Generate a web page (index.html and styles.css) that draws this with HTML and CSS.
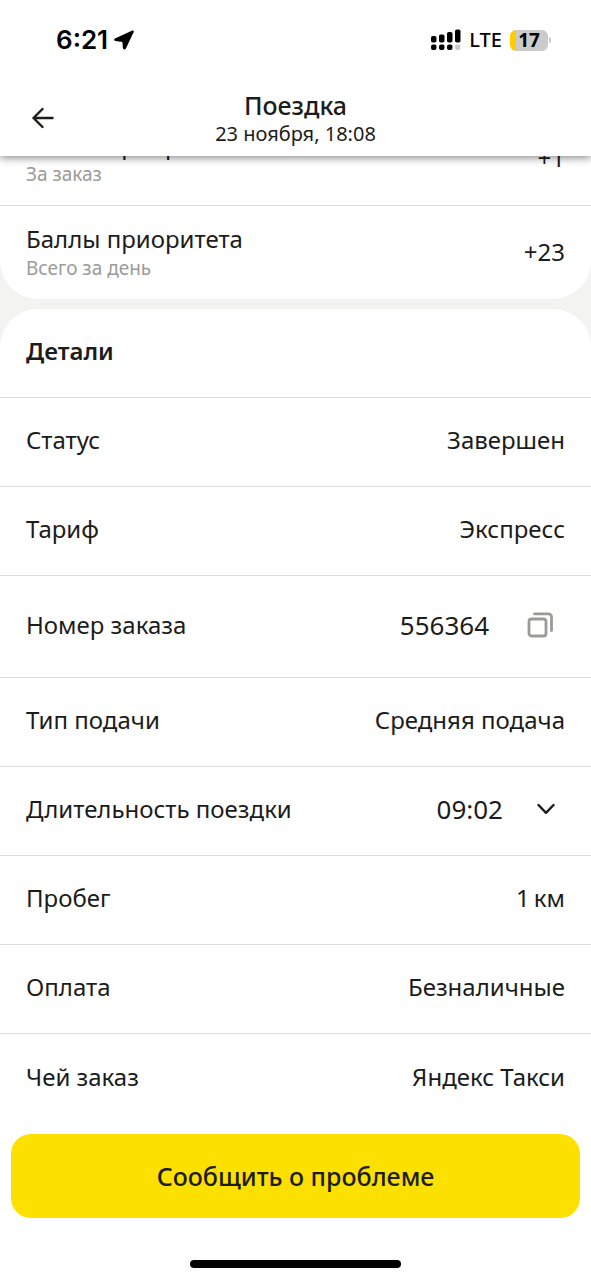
FILE: index.html
```html
<!DOCTYPE html>
<html lang="ru">
<head>
<meta charset="utf-8">
<meta name="viewport" content="width=device-width, initial-scale=1">
<title>Поездка</title>
<link rel="stylesheet" href="styles.css">
</head>
<body>
<div class="screen">
  <header class="top">
    <div class="status">
      <div class="status-left">
        <time class="clock">6:21</time>
        <svg class="location" viewBox="0 0 20 20" aria-hidden="true"><path d="M18.300.500 1 8.500C-.1 9-.1 10.600 1.200 10.900L8.400 11.900 8.900 18C9 19.600 11.200 19.900 11.900 18.500L19.700 2C20.200.900 19.400.100 18.300.500Z"/></svg>
      </div>
      <div class="status-right">
        <svg class="signal" viewBox="0 0 30 22" aria-hidden="true">
          <rect x="0" y="7" width="5.500" height="6.500" rx="1.800"/><rect x="8" y="5.500" width="5.500" height="8" rx="1.800"/><rect x="16" y="3" width="5.500" height="10.500" rx="1.800"/><rect x="24" y="0.500" width="5.500" height="13" rx="1.800"/>
          <rect x="0" y="15.500" width="5.500" height="5.500" rx="2"/><rect x="8" y="15.500" width="5.500" height="5.500" rx="2"/><rect x="16" y="15.500" width="5.500" height="5.500" rx="2"/><rect class="signal-off" x="24" y="15.500" width="5.500" height="5.500" rx="2"/>
        </svg>
        <span class="network">LTE</span>
        <span class="battery"><span class="battery-body">17</span><span class="battery-cap"></span></span>
      </div>
    </div>
    <div class="nav">
      <button class="icon-button" type="button" aria-label="Назад">
        <svg class="back" viewBox="0 0 22 22" aria-hidden="true"><path d="M20.500 11H1.500M10.500 2 1.500 11 10.500 20"/></svg>
      </button>
      <div class="heading">
        <h1 class="title">Поездка</h1>
        <p class="date">23 ноября, 18:08</p>
      </div>
    </div>
  </header>

  <main class="content">
    <dl class="card card-scrolled">
      <div class="row row-double">
        <dt>Баллы приоритета<small class="note">За заказ</small></dt>
        <dd>+1</dd>
      </div>
      <div class="row row-double">
        <dt>Баллы приоритета<small class="note">Всего за день</small></dt>
        <dd>+23</dd>
      </div>
    </dl>
    <section class="card card-details">
      <h2 class="row section-title">Детали</h2>
      <dl class="list">
        <div class="row"><dt>Статус</dt><dd>Завершен</dd></div>
        <div class="row"><dt>Тариф</dt><dd>Экспресс</dd></div>
        <div class="row row-tall"><dt>Номер заказа</dt>
          <dd class="number with-copy">556364
            <button class="icon-button" type="button" aria-label="Скопировать">
              <svg class="copy" viewBox="0 0 26 26" aria-hidden="true"><rect x="2" y="7" width="17" height="17" rx="2.500"/><path d="M7.500 1.800H21.500A3 3 0 0 1 24.500 4.800V18.500"/></svg>
            </button>
          </dd></div>
        <div class="row"><dt>Тип подачи</dt><dd>Средняя подача</dd></div>
        <div class="row"><dt>Длительность поездки</dt>
          <dd class="number with-chevron">09:02
            <button class="icon-button" type="button" aria-label="Развернуть">
              <svg class="chevron" viewBox="0 0 18 12" aria-hidden="true"><path d="M1.500 2 9 9.800 16.500 2"/></svg>
            </button>
          </dd></div>
        <div class="row"><dt>Пробег</dt><dd>1&thinsp;км</dd></div>
        <div class="row"><dt>Оплата</dt><dd>Безналичные</dd></div>
        <div class="row"><dt>Чей заказ</dt><dd>Яндекс Такси</dd></div>
      </dl>
    </section>
  </main>

  <footer class="footer">
    <button class="report" type="button">Сообщить о проблеме</button>
    <div class="home-indicator"></div>
  </footer>
</div>
</body>
</html>
```
FILE: styles.css
```css
* {
  box-sizing: border-box;
  margin: 0;
}

body {
  background: #fff;
  color: #1c1c1b;
  font: 400 24px/32px "Noto Sans", sans-serif;
}

button {
  border: 0;
  padding: 0;
  color: inherit;
  font: inherit;
  cursor: pointer;
}

svg {
  display: block;
}

.screen {
  display: flex;
  flex-direction: column;
  min-height: 100vh;
}

.top {
  position: sticky;
  top: 0;
  z-index: 1;
  background: #fff;
  box-shadow: 0 2px 8px rgba(0, 0, 0, 0.45);
}

.status {
  display: flex;
  justify-content: space-between;
  align-items: center;
  height: 80px;
  padding: 0 40px 0 56px;
  color: #000;
}

.status-left {
  display: flex;
  align-items: center;
  gap: 6px;
}

.status-right {
  display: flex;
  align-items: center;
  gap: 8px;
}

.clock {
  font: 600 26px/32px Inter, sans-serif;
}

.location {
  width: 20px;
  height: 20px;
}

.signal {
  width: 30px;
  height: 22px;
}

.signal-off {
  fill: #ccc;
}

.network {
  font: 500 20px/24px "Noto Sans", sans-serif;
}

.battery {
  display: flex;
  align-items: center;
  gap: 1px;
}

.battery-body {
  width: 38px;
  border-radius: 6px;
  background: linear-gradient(to right, #ffcc02 6px, #cbcbcb 6px);
  font: 700 19px/21px "Noto Sans", sans-serif;
  text-align: center;
}

.battery-cap {
  width: 2px;
  height: 6px;
  border-radius: 0 2px 2px 0;
  background: #ccc;
}

.nav {
  display: grid;
  grid-template-columns: 22px 1fr 22px;
  align-items: center;
  height: 76px;
  padding: 0 32px;
}

.icon-button {
  background: none;
}

.back {
  width: 22px;
  height: 22px;
}

.back,
.copy,
.chevron {
  fill: none;
  stroke: #1c1c1b;
  stroke-width: 2.4;
  stroke-linecap: round;
  stroke-linejoin: round;
}

.heading {
  text-align: center;
}

.title {
  font-size: 25px;
  font-weight: 500;
  line-height: 32px;
}

.date {
  font-size: 20px;
  line-height: 26px;
}

.content {
  flex: 1;
  display: flex;
  flex-direction: column;
  gap: 10px;
  overflow: hidden;
  background: #f3f3f2;
}

.card {
  background: #fff;
}

/* Scrolled partly under the sticky header */
.card-scrolled {
  margin-top: -43px;
  border-radius: 0 0 38px 38px;
}

.card-details {
  flex: 1;
  border-radius: 38px 38px 0 0;
}

.row {
  display: flex;
  justify-content: space-between;
  align-items: center;
  gap: 16px;
  min-height: 89px;
  padding: 0 26px 4px;
  border-bottom: 1px solid #dcdcdc;
}

.row:last-child {
  border-bottom: 0;
}

.row-double {
  min-height: 93px;
  padding-bottom: 2px;
}

.row-tall {
  min-height: 102px;
}

.section-title {
  min-height: 89px;
  font-size: 24px;
  font-weight: 600;
}

.note {
  display: block;
  color: #9b9b99;
  font-size: 19px;
  line-height: 26px;
}

dd {
  text-align: right;
}

.number {
  font-size: 26px;
}

.with-copy,
.with-chevron {
  display: flex;
  align-items: center;
}

.with-copy {
  gap: 38px;
  padding-right: 12px;
}

.with-chevron {
  gap: 34px;
  padding-right: 10px;
}

.copy {
  width: 26px;
  height: 26px;
  stroke: #9b9b99;
  stroke-width: 2.8;
}

.chevron {
  width: 18px;
  height: 12px;
}

.footer {
  display: flex;
  flex-direction: column;
  align-items: center;
  gap: 42px;
  padding: 11px 11px 12px;
}

.report {
  width: 100%;
  height: 84px;
  border-radius: 20px;
  background: #fce000;
  font-size: 25px;
  font-weight: 500;
}

.home-indicator {
  width: 211px;
  height: 8px;
  border-radius: 4px;
  background: #000;
}
```
